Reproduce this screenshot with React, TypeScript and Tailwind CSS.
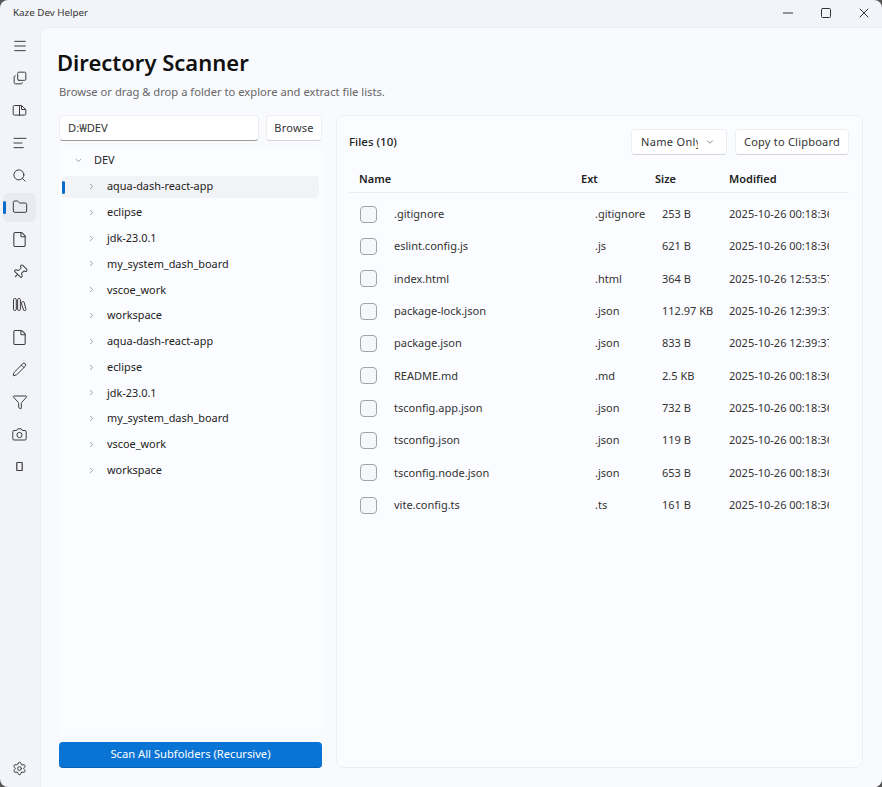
import { AlignLeft, ChevronDown, ChevronRight, Copy, File, Filter, Folder, Menu, Minus, Pencil, Pin, Search, Settings, Square, X } from 'lucide-react';

const font = "font-['Noto_Sans','Liberation_Sans',sans-serif]";

const folders = ['aqua-dash-react-app', 'eclipse', 'jdk-23.0.1', 'my_system_dash_board', 'vscoe_work', 'workspace'];

const files = [
  ['.gitignore', '.gitignore', '253 B', '2025-10-26 00:18:36'],
  ['eslint.config.js', '.js', '621 B', '2025-10-26 00:18:36'],
  ['index.html', '.html', '364 B', '2025-10-26 12:53:57'],
  ['package-lock.json', '.json', '112.97 KB', '2025-10-26 12:39:37'],
  ['package.json', '.json', '833 B', '2025-10-26 12:39:37'],
  ['README.md', '.md', '2.5 KB', '2025-10-26 00:18:36'],
  ['tsconfig.app.json', '.json', '732 B', '2025-10-26 00:18:36'],
  ['tsconfig.json', '.json', '119 B', '2025-10-26 00:18:36'],
  ['tsconfig.node.json', '.json', '653 B', '2025-10-26 00:18:36'],
  ['vite.config.ts', '.ts', '161 B', '2025-10-26 00:18:36'],
];

function BookIcon() {
  return (
    <svg width="15" height="15" viewBox="0 0 15 15" fill="none" stroke="currentColor" strokeWidth="1">
      <path d="M9.500 2.500H2.500a1.300 1.300 0 0 0-1.300 1.300v7a1.300 1.300 0 0 0 1.300 1.300h10a1.300 1.300 0 0 0 1.300-1.300V6.500z" />
      <path d="M7.500 2.500v10.500" />
      <path d="M9.500 2.500v4h4.300" />
    </svg>
  );
}

function BooksIcon() {
  return (
    <svg width="15" height="15" viewBox="0 0 15 15" fill="none" stroke="currentColor" strokeWidth="1">
      <rect x="1.500" y="1.500" width="2.800" height="12" rx="1.200" />
      <rect x="5.600" y="1.500" width="2.800" height="12" rx="1.200" />
      <path d="M9.500 5.200l1.600-.6c.4-.1.700 0 .9.400l2 7.400c.1.400 0 .7-.4.800l-1.200.4c-.4.100-.7 0-.8-.4l-2.300-7.100c-.1-.3 0-.7.200-.9z" />
    </svg>
  );
}

function CameraIcon() {
  return (
    <svg width="15" height="15" viewBox="0 0 15 15" fill="none" stroke="currentColor" strokeWidth="1">
      <path d="M2 3.500h2.700l1-1.700h3.600l1 1.700H13a1.200 1.200 0 0 1 1.200 1.200v7.100A1.200 1.200 0 0 1 13 13H2a1.200 1.200 0 0 1-1.200-1.200V4.700A1.200 1.200 0 0 1 2 3.500z" />
      <circle cx="7.500" cy="8" r="2.600" />
    </svg>
  );
}

function SmallRect() {
  return (
    <svg width="15" height="15" viewBox="0 0 15 15" fill="none" stroke="currentColor" strokeWidth="1.200">
      <rect x="4.800" y="3.500" width="5.400" height="8" rx="0.600" />
    </svg>
  );
}

function NavItem({ children, active }: { children: React.ReactNode; active?: boolean }) {
  return (
    <div className={`relative mx-[3px] flex h-[29px] w-[33px] items-center justify-center rounded-[5px] ${active ? 'bg-[#e9ebf2]' : ''}`}>
      {active && <div className="absolute left-0 top-[8px] h-[13px] w-[3px] rounded-full bg-[#0a6cc8]" />}
      {children}
    </div>
  );
}

function TreeRow({ name, active }: { name: string; active?: boolean }) {
  return (
    <div className={`relative flex h-[22px] items-center rounded-[4px] pl-[25px] ${active ? 'bg-[#f2f3f6]' : ''}`}>
      {active && <div className="absolute left-0 top-[5px] h-[13px] w-[3px] rounded-full bg-[#0a6cc8]" />}
      <ChevronRight size={9} strokeWidth={2} className="text-[#808080]" />
      <span className="ml-[11px] text-[10.900px] text-[#222]">{name}</span>
    </div>
  );
}

function Button({ children, className }: { children: React.ReactNode; className?: string }) {
  return (
    <div className={`flex h-[26px] items-center rounded-[4px] border border-[#eceef2] border-b-[#d4d5d9] bg-white text-[11px] tracking-[0.02em] text-[#333] ${className ?? ''}`}>
      {children}
    </div>
  );
}

export default function App() {
  return (
    <div className="h-[787px] w-[882px] bg-[#555]">
      <div className={`flex h-full w-full flex-col overflow-hidden rounded-[8px] bg-[#f2f4f9] ${font}`}>
        <div className="flex h-[27px] shrink-0 items-center justify-between pl-[13px]">
          <span className="text-[9.800px] text-[#333]">Kaze Dev Helper</span>
          <div className="-mt-[2px] flex items-center gap-[22px] pr-[10px] text-[#333]">
            <Minus size={16} strokeWidth={1.500} />
            <Square size={12} strokeWidth={2} className="mx-[2px]" />
            <X size={16} strokeWidth={1.500} />
          </div>
        </div>
        <div className="flex min-h-0 flex-1">
          <div className="flex w-[40px] shrink-0 flex-col pt-[4px] text-[#3c3c3c]">
            <div className="flex flex-col gap-[3.400px]">
              <NavItem><Menu size={16} strokeWidth={1.500} /></NavItem>
              <NavItem><Copy size={14} strokeWidth={1.700} className="-scale-y-100" /></NavItem>
              <NavItem><BookIcon /></NavItem>
              <NavItem><AlignLeft size={16} strokeWidth={1.500} /></NavItem>
              <NavItem><Search size={15} strokeWidth={1.600} /></NavItem>
              <NavItem active><Folder size={16} strokeWidth={1.500} /></NavItem>
              <NavItem><File size={17} strokeWidth={1.500} /></NavItem>
              <NavItem><Pin size={16} strokeWidth={1.500} className="rotate-45" /></NavItem>
              <NavItem><BooksIcon /></NavItem>
              <NavItem><File size={17} strokeWidth={1.500} /></NavItem>
              <NavItem><Pencil size={15} strokeWidth={1.600} /></NavItem>
              <NavItem><Filter size={16} strokeWidth={1.500} /></NavItem>
              <NavItem><CameraIcon /></NavItem>
              <NavItem><SmallRect /></NavItem>
            </div>
            <div className="mt-auto mb-[4px]">
              <NavItem><Settings size={15} strokeWidth={1.600} /></NavItem>
            </div>
          </div>
          <div className="flex min-w-0 flex-1 flex-col rounded-tl-[8px] border-l border-t border-[#eceef3] bg-[#f9fafe] pb-[19px] pl-[18px] pr-[19px] pt-[16px]">
            <h1 className="-ml-[2px] text-[22px] font-semibold leading-[36px] text-[#111]">Directory Scanner</h1>
            <p className="mt-[3px] text-[11.200px] leading-[18px] text-[#666]">Browse or drag &amp; drop a folder to explore and extract file lists.</p>
            <div className="mt-[14px] flex min-h-0 flex-1 gap-[14px]">
              <div className="flex w-[263px] shrink-0 flex-col">
                <div className="flex gap-[7px]">
                  <div className="flex h-[26px] w-[200px] items-center rounded-[4px] border border-[#eceef2] border-b-[#9a9a9a] bg-white pl-[8px] text-[11.200px] text-[#333]">D:₩DEV</div>
                  <Button className="w-[56px] justify-center">Browse</Button>
                </div>
                <div className="mt-[6px] flex-1 rounded-[4px] bg-[#fbfcff] px-[3px] pt-[2px]">
                  <div className="flex h-[22px] items-center pl-[12px]">
                    <ChevronDown size={9} strokeWidth={2} className="text-[#808080]" />
                    <span className="ml-[11px] text-[10.900px] text-[#222]">DEV</span>
                  </div>
                  <div className="mt-[4.500px] flex w-[257px] flex-col gap-[3.800px]">
                    {folders.map((name, i) => <TreeRow key={i} name={name} active={i === 0} />)}
                    {folders.map((name, i) => <TreeRow key={i} name={name} />)}
                  </div>
                </div>
                <div className="mt-[7px] flex h-[26px] items-center justify-center rounded-[4px] border-b border-[#0a5fae] bg-[#0a74d4] text-[11.200px] text-white">Scan All Subfolders (Recursive)</div>
              </div>
              <div className="flex min-w-0 flex-1 flex-col rounded-[8px] border border-[#eceef3] bg-[#fbfcff] pl-[12px] pr-[13px] pt-[13px]">
                <div className="flex items-center justify-between">
                  <span className="text-[11.500px] font-medium text-[#222]">Files (10)</span>
                  <div className="flex gap-[8px]">
                    <Button className="w-[96px] justify-between pl-[9px] pr-[11px]">
                      <span className="w-[57px] overflow-hidden whitespace-nowrap tracking-[0.03em]">Name Only</span>
                      <ChevronDown size={10} strokeWidth={1.800} className="text-[#666]" />
                    </Button>
                    <Button className="w-[114px] justify-center">Copy to Clipboard</Button>
                  </div>
                </div>
                <div className="mt-[12px] flex h-[26px] items-center border-b border-[#eceef1] pb-[1px] text-[11px] font-semibold text-[#222]">
                  <span className="w-[232px] pl-[10px]">Name</span>
                  <span className="w-[74px]">Ext</span>
                  <span className="w-[74px]">Size</span>
                  <span>Modified</span>
                </div>
                <div className="mt-[5px] flex flex-col">
                  {files.map((f) => (
                    <div key={f[0]} className="flex h-[32.350px] items-center text-[11px] text-[#333]">
                      <div className="ml-[11px] h-[17px] w-[17px] shrink-0 rounded-[4px] border border-[#a2a3a6] bg-[#f6f7fa]" />
                      <span className="ml-[17px] w-[201px] shrink-0">{f[0]}</span>
                      <span className="w-[67px] shrink-0 overflow-hidden whitespace-nowrap">{f[1]}</span>
                      <span className="w-[67px] shrink-0 whitespace-nowrap">{f[2]}</span>
                      <span className="w-[100px] shrink-0 overflow-hidden whitespace-nowrap">{f[3]}</span>
                    </div>
                  ))}
                </div>
              </div>
            </div>
          </div>
        </div>
      </div>
    </div>
  );
}
